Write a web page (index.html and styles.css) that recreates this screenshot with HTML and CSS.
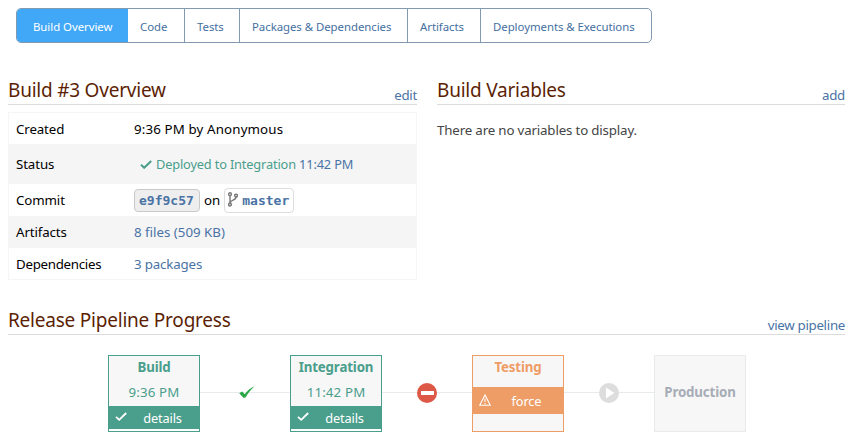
FILE: index.html
```html
<!DOCTYPE html>
<html lang="en">
<head>
<meta charset="utf-8">
<title>Build #3 Overview</title>
<link rel="stylesheet" href="styles.css">
</head>
<body>
<nav class="tabs">
  <a class="tab tab-overview active">Build Overview</a>
  <a class="tab tab-code">Code</a>
  <a class="tab tab-tests">Tests</a>
  <a class="tab tab-packages">Packages &amp; Dependencies</a>
  <a class="tab tab-artifacts">Artifacts</a>
  <a class="tab tab-deployments">Deployments &amp; Executions</a>
</nav>
<main>
  <div class="columns">
    <section>
      <header class="heading"><h2>Build #3 Overview</h2><a class="link">edit</a></header>
      <dl class="info">
        <div class="row"><dt>Created</dt><dd class="created">9:36 PM by Anonymous</dd></div>
        <div class="row row-status"><dt>Status</dt><dd class="status"><svg class="status-check" viewBox="0 0 12 9"><path d="M1 4.8 4.2 7.8 11.2 1"/></svg><span class="deployed">Deployed to Integration</span>&nbsp;<a class="link">11:42 PM</a></dd></div>
        <div class="row"><dt>Commit</dt><dd class="commit"><a class="hash">e9f9c57</a><span>on</span><a class="branch"><svg class="branch-icon" viewBox="0 0 10 15"><circle cx="2" cy="2.2" r="1.4"/><circle cx="8" cy="3.6" r="1.4"/><circle cx="2" cy="12.6" r="1.4"/><path d="M2 3.6V11.2M8 5C8 8.8 2.6 7.4 2.1 10.8"/></svg>master</a></dd></div>
        <div class="row"><dt>Artifacts</dt><dd><a class="link">8 files (509 KB)</a></dd></div>
        <div class="row"><dt class="tight">Dependencies</dt><dd><a class="link packages">3 packages</a></dd></div>
      </dl>
    </section>
    <section>
      <header class="heading"><h2>Build Variables</h2><a class="link">add</a></header>
      <p class="empty">There are no variables to display.</p>
    </section>
  </div>
  <section class="progress">
    <header class="heading"><h2>Release Pipeline Progress</h2><a class="link">view pipeline</a></header>
    <div class="pipeline">
      <div class="stage done"><b>Build</b><time>9:36 PM</time><a class="action"><svg class="action-check" viewBox="0 0 12 9"><path d="M1 4.8 4.2 7.8 11.2 1"/></svg><span>details</span></a></div>
      <div class="connector"><svg class="passed" width="16" height="14" viewBox="0 0 16 14"><path fill="#28a745" d="M.2 8.2 3.2 6.6 5.7 9.3C8.4 5.6 11.4 2.7 15.6 1.2 12 4.4 8.8 8.2 6.8 12.3L4.7 13Z"/></svg></div>
      <div class="stage done"><b>Integration</b><time>11:42 PM</time><a class="action"><svg class="action-check" viewBox="0 0 12 9"><path d="M1 4.8 4.2 7.8 11.2 1"/></svg><span>details</span></a></div>
      <div class="connector"><svg width="20" height="20" viewBox="0 0 20 20"><circle cx="10" cy="10" r="10" fill="#dd5846"/><path fill="#fff" d="M4 8H17V12H4Z"/></svg></div>
      <div class="stage warning"><b>Testing</b><a class="action"><svg class="action-alert" viewBox="0 0 12 12"><path d="M6 1 11.3 11.3H.7ZM6 4.5V8M6 9V10.2"/></svg><span>force</span></a></div>
      <div class="connector"><svg width="20" height="20" viewBox="0 0 20 20"><circle cx="10" cy="10" r="10" fill="#ddd"/><path fill="#fff" d="M7 4.6 15.3 10 7 15.4Z"/></svg></div>
      <div class="stage pending"><b>Production</b></div>
    </div>
  </section>
</main>
</body>
</html>
```
FILE: styles.css
```css
* { box-sizing: border-box; }
body { margin: 0; background: #fff; color: #000; font: 13.3px/20px "Noto Sans", "Open Sans", sans-serif; overflow: hidden; }
h2, p, dl, dd { margin: 0; }
svg { display: block; flex: none; }
.link { color: #4a73a5; }

.tabs { display: flex; width: 636px; height: 35px; margin: 8px 0 0 16px; border: 1px solid #8299b0; border-radius: 5px; overflow: hidden; font-size: 11.4px; letter-spacing: -.04px; line-height: 36px; color: #456f9f; white-space: nowrap; }
.tab { padding-left: 12px; border-right: 1px solid #8299b0; flex: none; }
.tab-overview { width: 111px; padding-left: 16px; }
.tab-code { width: 57px; }
.tab-tests { width: 55px; }
.tab-packages { width: 168px; }
.tab-artifacts { width: 73px; }
.tab-deployments { flex: 1; border-right: 0; }
.tab.active { background: #41a8f7; border-color: #41a8f7; color: #fff; margin: -1px 0 -1px; line-height: 38px; }

main { padding: 33px 8px 0; }
.columns { display: grid; grid-template-columns: 409px 408px; gap: 20px; height: 230px; }
.heading { display: flex; justify-content: space-between; height: 29px; border-bottom: 1px solid #dcdcdc; white-space: nowrap; }
h2 { font-size: 19px; letter-spacing: -.22px; line-height: 28px; font-weight: 400; color: #5c1f05; }
.heading .link { line-height: 38px; letter-spacing: -.3px; }

.info { margin-top: 7px; border: 1px solid #f5f5f5; }
.row { display: flex; align-items: center; height: 32px; padding-left: 7px; }
.row:first-child, .row:last-child { height: 31px; }
.row:nth-child(even) { background: #f5f5f5; }
.row-status { height: 40px; }
dt { width: 118px; letter-spacing: -.12px; }
.tight { letter-spacing: -.28px; }
.packages { letter-spacing: -.15px; }
.created { letter-spacing: .14px; }
.status { display: flex; align-items: center; padding-left: 6px; font-size: 12.8px; letter-spacing: -.16px; }
.status-check { width: 12px; height: 9px; margin-right: 4px; }
.status-check path { fill: none; stroke: #4a9e8c; stroke-width: 2; }
.deployed { color: #4a9e8c; }
.commit { display: flex; align-items: center; gap: 4px; }
.hash, .branch { font: bold 13px/22px "DejaVu Sans Mono", monospace; color: #4a73a5; border-radius: 4px; }
.hash { width: 66px; height: 23px; padding-left: 4px; border: 1px solid #c9c9c9; background: #eee; }
.branch { display: flex; width: 70px; height: 25px; padding: 1px 0 0 3px; gap: 4px; border: 1px solid #ddd; }
.branch-icon { width: 10px; height: 15px; margin-top: 2px; fill: none; stroke: #777; stroke-width: 1.4; }
.empty { margin-top: 15px; color: #444; letter-spacing: -.16px; }

.progress .heading { height: 29px; }
.pipeline { display: flex; margin: 20px 0 0 100px; }
.stage { display: flex; flex-direction: column; align-items: stretch; width: 92px; height: 77px; border: 1px solid; background: #f7f7f7; text-align: center; }
.stage b { line-height: 24px; letter-spacing: -.15px; }
.stage time { line-height: 24px; padding-bottom: 2px; letter-spacing: .15px; }
.done b, .warning b { margin-top: -1px; padding-bottom: 1px; }
.action { display: flex; align-items: center; height: 23px; padding-left: 6px; color: #fff; }
.action span { flex: 1; padding-right: 1px; text-align: center; font-size: 12.8px; letter-spacing: -.15px; }
.action-check { width: 12px; height: 9px; margin-bottom: 3px; }
.action path { fill: none; stroke: #fff; stroke-width: 1.8; }
.done { color: #4a9e8c; border-color: #4a9e8c; }
.done .action { background: #4a9e8c; box-shadow: 0 2px #fff; }
.warning { color: #ee9d67; border-color: #ee9d67; }
.warning .action { height: 27px; margin-top: 7px; background: #ee9d67; }
.action-alert { width: 12px; height: 12px; margin-bottom: 2px; }
.action .action-alert path { stroke-width: 1.1; }
.pending { justify-content: center; color: #a7adb6; border-color: #e7ebed; }
.pending b { margin-top: -3px; }
.connector { display: flex; align-items: center; justify-content: center; width: 90px; height: 76px; background: linear-gradient(#e7ebec, #e7ebec) 0 37px / 100% 1px no-repeat; }
.passed { margin: -3px 0 0 3px; }
```
